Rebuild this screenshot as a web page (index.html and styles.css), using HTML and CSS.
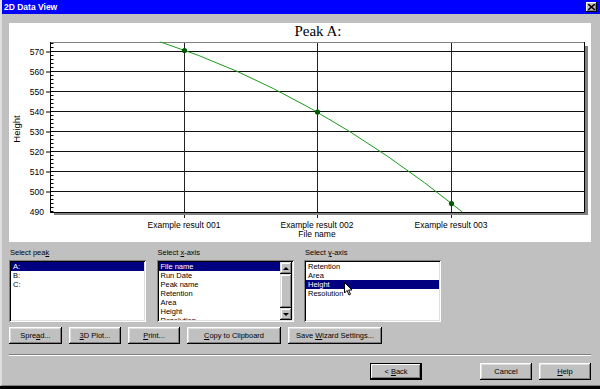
FILE: index.html
```html
<!DOCTYPE html>
<html>
<head>
    <title>2D Data View</title>
    <link rel="stylesheet" href="styles.css">
</head>
<body>
    <div class="window">
        <div class="titlebar">
            <span class="title">2D Data View</span>
            <span class="close">
                <svg width="7" height="6" viewBox="0 0 7 6"><path d="M0 0L7 6M7 0L0 6" stroke="#000" stroke-width="1.6"/></svg>
            </span>
        </div>
        <div class="client">
            <div class="chart">
                <svg width="582" height="219" viewBox="9 23 582 219">
                    <text class="chart-title" x="318" y="36" text-anchor="middle">Peak A:</text>
                    <!-- grid -->
                    <path d="M50 51.5H584M50 71.5H584M50 91.5H584M50 111.5H584M50 131.5H584M50 151.5H584M50 171.5H584M50 191.5H584" stroke="#111" stroke-width="1"/>
                    <path d="M184.5 42V218M317.5 42V218M451.5 42V218" stroke="#222" stroke-width="1"/>
                    <!-- frame -->
                    <path d="M585 46H588V215H54V213H585Z" fill="#808080"/>
                    <path d="M50 42.5H584" stroke="#808080" stroke-width="1"/>
                    <path d="M50 212.5H584.5V42" stroke="#000" stroke-width="1" fill="none"/>
                    <path d="M50.5 42V213" stroke="#000" stroke-width="1"/>
                    <path d="M52 212V42" stroke="#000" stroke-width="3" stroke-dasharray="1 3"/>
                    <path d="M48 52V212" stroke="#000" stroke-width="4" stroke-dasharray="1 19" transform="translate(0 -0.5)"/>
                    <!-- axis labels -->
                    <g class="tick">
                        <text x="44" y="54.5">570</text>
                        <text x="44" y="74.5">560</text>
                        <text x="44" y="94.5">550</text>
                        <text x="44" y="114.5">540</text>
                        <text x="44" y="134.5">530</text>
                        <text x="44" y="154.5">520</text>
                        <text x="44" y="174.5">510</text>
                        <text x="44" y="194.5">500</text>
                        <text x="44" y="214.5">490</text>
                    </g>
                    <g class="cat">
                        <text x="184" y="228">Example result 001</text>
                        <text x="317" y="228">Example result 002</text>
                        <text x="451" y="228">Example result 003</text>
                        <text x="317" y="237">File name</text>
                    </g>
                    <text class="axis-name" transform="translate(20 129) rotate(-90)" text-anchor="middle">Height</text>
                    <!-- series -->
                    <path d="M160.5 42Q311.5 90.7 462.4 212" stroke="#1a9a1a" stroke-width="1" fill="none"/>
                    <circle cx="184.5" cy="50.5" r="2.6" fill="#005a00"/>
                    <circle cx="317.5" cy="112" r="2.6" fill="#005a00"/>
                    <circle cx="451.5" cy="203.5" r="2.6" fill="#005a00"/>
                </svg>
            </div>

            <div class="selectors">
                <div class="field">
                    <div class="label">Select pea<u>k</u></div>
                    <div class="listbox">
                        <div class="items">
                            <div class="item selected">A:</div>
                            <div class="item">B:</div>
                            <div class="item">C:</div>
                        </div>
                    </div>
                </div>
                <div class="field">
                    <div class="label">Select <u>x</u>-axis</div>
                    <div class="listbox">
                        <div class="items">
                            <div class="item selected">File name</div>
                            <div class="item">Run Date</div>
                            <div class="item">Peak name</div>
                            <div class="item">Retention</div>
                            <div class="item">Area</div>
                            <div class="item">Height</div>
                            <div class="item">Resolution</div>
                        </div>
                        <div class="scrollbar">
                            <div class="sb-btn"><span class="arrow-up"></span></div>
                            <div class="sb-thumb"></div>
                            <div class="sb-btn"><span class="arrow-down"></span></div>
                        </div>
                    </div>
                </div>
                <div class="field">
                    <div class="label">Select <u>y</u>-axis</div>
                    <div class="listbox">
                        <div class="items">
                            <div class="item">Retention</div>
                            <div class="item">Area</div>
                            <div class="item selected">Height</div>
                            <div class="item">Resolution</div>
                        </div>
                        <svg class="cursor" width="9" height="14" viewBox="0 0 9 14">
                            <path d="M0.5 0.5V11L3 8.5L5 13L6.5 12.3L4.6 8H8Z" fill="#fff" stroke="#000" stroke-width="1"/>
                        </svg>
                    </div>
                </div>
            </div>

            <div class="tools">
                <button class="btn w-spread">Spre<u>a</u>d...</button>
                <button class="btn w-small"><u>3</u>D Plot...</button>
                <button class="btn w-small"><u>P</u>rint...</button>
                <button class="btn w-wide"><u>C</u>opy to Clipboard</button>
                <button class="btn w-wide">Save <u>W</u>izard Settings...</button>
            </div>

            <div class="sep"></div>

            <div class="nav">
                <button class="btn default">&lt; <u>B</u>ack</button>
                <button class="btn">Cancel</button>
                <button class="btn"><u>H</u>elp</button>
            </div>
        </div>
    </div>
</body>
</html>
```

FILE: styles.css
```css
body {
    margin: 0;
    background: #000;
    font-family: "Liberation Sans", Arial, sans-serif;
    font-size: 7.5px;
    color: #000;
}
.window {
    width: 598px;
    height: 385px;
    background: #c0c0c0;
    border-left: 2px solid #dfdfdf;
    border-bottom: 1px solid #808080;
}
.titlebar {
    height: 14px;
    background: #0000ff;
    color: #fff;
    font-weight: bold;
    font-size: 8.5px;
    display: flex;
    align-items: center;
    justify-content: space-between;
    padding: 0 3px 0 2px;
}
.close {
    width: 11px;
    height: 10px;
    box-sizing: border-box;
    background: #c0c0c0;
    box-shadow: inset -1px -1px #000, inset 1px 1px #fff, inset -2px -2px #808080;
    display: flex;
    align-items: center;
    justify-content: center;
}
.close svg {
    display: block;
}
.client {
    padding: 9px 9px 0 7px;
}
.chart {
    background: #fff;
    height: 219px;
}
.chart svg {
    display: block;
}
.chart-title {
    font-family: "Liberation Serif", "Times New Roman", serif;
    font-size: 15px;
}
.tick text {
    font-size: 8.5px;
    text-anchor: end;
}
.cat text {
    font-size: 8.5px;
    text-anchor: middle;
}
.axis-name {
    font-size: 9.5px;
}
.selectors {
    display: grid;
    grid-template-columns: 137px 137px 137px;
    column-gap: 10.5px;
    margin-top: 6px;
}
.label {
    line-height: 9px;
    height: 9px;
    padding-left: 1px;
}
.listbox {
    position: relative;
    margin-top: 3px;
    height: 62px;
    box-sizing: border-box;
    padding: 2px;
    background: #fff;
    box-shadow: inset 1px 1px #808080, inset -1px -1px #fff, inset 2px 2px #000, inset -2px -2px #dfdfdf;
    display: flex;
    overflow: hidden;
}
.items {
    flex: 1;
    overflow: hidden;
}
.item {
    line-height: 9px;
    height: 9px;
    padding-left: 2px;
    white-space: nowrap;
}
.item.selected {
    background: #000080;
    color: #fff;
}
.scrollbar {
    width: 12px;
    display: flex;
    flex-direction: column;
    background: #dfdfdf;
}
.sb-btn, .sb-thumb {
    background: #c0c0c0;
    box-shadow: inset -1px -1px #000, inset 1px 1px #dfdfdf, inset -2px -2px #808080, inset 2px 2px #fff;
}
.sb-btn {
    height: 12px;
    display: flex;
    align-items: center;
    justify-content: center;
}
.sb-thumb {
    flex: 1;
}
.arrow-up, .arrow-down {
    width: 0;
    height: 0;
    border-left: 3px solid transparent;
    border-right: 3px solid transparent;
}
.arrow-up {
    border-bottom: 3px solid #000;
}
.arrow-down {
    border-top: 3px solid #000;
}
.cursor {
    position: absolute;
    left: 40px;
    top: 22px;
}
.tools {
    display: flex;
    gap: 7px;
    margin-top: 5px;
}
.btn {
    height: 17px;
    padding: 0;
    border: none;
    background: #c0c0c0;
    font-family: inherit;
    font-size: 7.5px;
    color: #000;
    box-shadow: inset -1px -1px #000, inset 1px 1px #fff, inset -2px -2px #808080, inset 2px 2px #dfdfdf;
    width: 52px;
}
.w-spread {
    width: 53px;
}
.w-small {
    width: 52px;
}
.w-wide {
    width: 94px;
}
.sep {
    margin-top: 10px;
    border-top: 1px solid #808080;
    border-bottom: 1px solid #fff;
}
.nav {
    display: flex;
    justify-content: flex-end;
    gap: 7px;
    margin-top: 7px;
}
.btn.default {
    margin-right: 51px;
    box-shadow: inset 0 0 0 1px #000, inset -2px -2px #000, inset 2px 2px #fff, inset -3px -3px #808080;
}
```
